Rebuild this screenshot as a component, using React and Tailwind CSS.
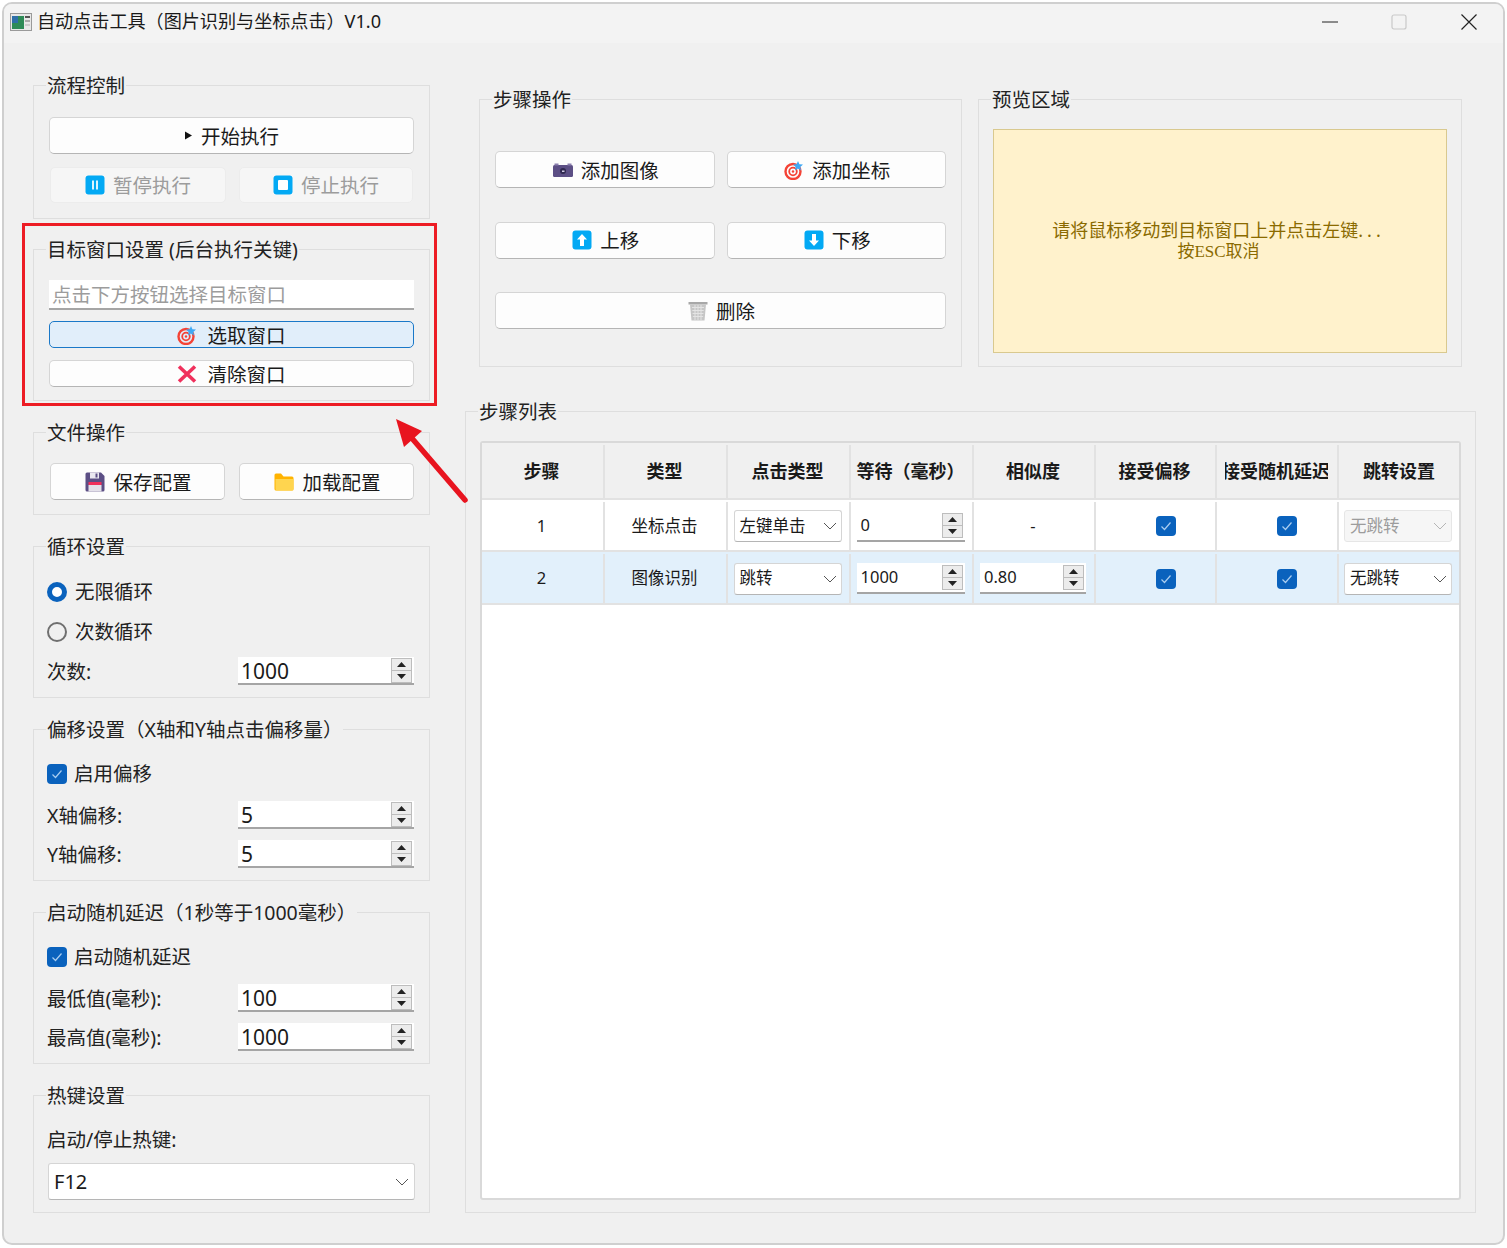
import React from 'react';

const FONT = 'font-["Noto_Sans","Noto_Sans_CJK_SC",sans-serif]';

function AppIcon() {
  return (
    <svg width="22" height="18" viewBox="0 0 22 18" className="shrink-0">
      <rect x="0.5" y="0.5" width="21" height="17" fill="#e8e8e8" stroke="#9a9a9a" />
      <rect x="2" y="3" width="12" height="13" fill="#2e8b57" />
      <rect x="2" y="3" width="6" height="7" fill="#2f6fa8" />
      <rect x="15" y="3" width="5" height="2" fill="#555" />
      <rect x="15" y="7" width="5" height="2" fill="#aaa" />
      <rect x="15" y="11" width="5" height="2" fill="#ccc" />
    </svg>
  );
}

function PlayIcon() {
  return (
    <svg width="9" height="9" viewBox="0 0 9 9" className="shrink-0">
      <path d="M1 0.5 L8 4.5 L1 8.5 Z" fill="#111" />
    </svg>
  );
}

function SquareIcon({ kind }) {
  return (
    <svg width="20" height="20" viewBox="0 0 20 20" className="shrink-0">
      <rect x="0.5" y="0.5" width="19" height="19" rx="3" fill="#03a9f4" />
      {kind === 'pause' && <path d="M7 5.5h2v9H7zM11 5.5h2v9h-2z" fill="#dff4fe" />}
      {kind === 'stop' && <rect x="5" y="5" width="10" height="10" rx="1" fill="#fff" />}
      {kind === 'up' && <path d="M10 4 L15 9.5 H12 V16 H8 V9.5 H5 Z" fill="#fff" />}
      {kind === 'down' && <path d="M10 16 L15 10.5 H12 V4 H8 V10.5 H5 Z" fill="#fff" />}
    </svg>
  );
}

function TargetIcon() {
  return (
    <svg width="20" height="20" viewBox="0 0 20 20" className="shrink-0">
      <circle cx="9" cy="11.5" r="7.5" fill="none" stroke="#f44336" strokeWidth="2.4" />
      <circle cx="9" cy="11.5" r="3.8" fill="none" stroke="#f44336" strokeWidth="1.8" />
      <circle cx="9" cy="11.5" r="1.2" fill="#f44336" />
      <path d="M14 1 L15.4 4.2 L19 4.6 L16.3 6.9 L17 10.4 L14 8.6 L11 10.4 L11.7 6.9 L9 4.6 L12.6 4.2 Z" fill="#3fa9f5" />
    </svg>
  );
}

function CrossIcon() {
  return (
    <svg width="20" height="18" viewBox="0 0 20 18" className="shrink-0">
      <path d="M2 1.5 L18 16.5 M18 1.5 L2 16.5" stroke="#f0305c" strokeWidth="3.6" />
    </svg>
  );
}

function SaveIcon() {
  return (
    <svg width="20" height="20" viewBox="0 0 20 20" className="shrink-0">
      <path d="M0.5 2 a1.5 1.5 0 0 1 1.5 -1.5 H16 L19.5 4 V18 a1.5 1.5 0 0 1 -1.5 1.5 H2 a1.5 1.5 0 0 1 -1.5 -1.5 Z" fill="#5c4f85" />
      <rect x="5" y="0.5" width="9" height="6" fill="#e9e7ef" />
      <rect x="10.5" y="1.5" width="2" height="4" fill="#5c4f85" />
      <rect x="3.5" y="10" width="13" height="3" fill="#f0305c" />
      <rect x="3.5" y="13" width="13" height="6.5" fill="#e4e1ea" />
    </svg>
  );
}

function FolderIcon() {
  return (
    <svg width="20" height="18" viewBox="0 0 20 18" className="shrink-0">
      <path d="M0.5 2 a1.5 1.5 0 0 1 1.5 -1.5 H7 L9.5 3.5 H18 a1.5 1.5 0 0 1 1.5 1.5 V16 a1.5 1.5 0 0 1 -1.5 1.5 H2 a1.5 1.5 0 0 1 -1.5 -1.5 Z" fill="#ffb300" />
      <path d="M1.5 6 H19.5 V16 a1.5 1.5 0 0 1 -1.5 1.5 H3 a1.5 1.5 0 0 1 -1.5 -1.5 Z" fill="#ffd54f" />
    </svg>
  );
}

function CameraIcon() {
  return (
    <svg width="20" height="14" viewBox="0 0 20 14" className="shrink-0">
      <rect x="0" y="2" width="20" height="12" rx="1.5" fill="#5c4f85" />
      <rect x="1.5" y="0.5" width="4" height="2" fill="#8a7fae" />
      <rect x="14.5" y="0.5" width="4" height="2" fill="#8a7fae" />
      <circle cx="10" cy="8" r="3" fill="#2f2850" />
      <path d="M9 7.5h2.5v1.5H9z" fill="#cfc9e2" />
    </svg>
  );
}

function TrashIcon() {
  return (
    <svg width="20" height="20" viewBox="0 0 20 20" className="shrink-0">
      <rect x="0.5" y="1" width="19" height="2.5" fill="#a8a8a8" />
      <path d="M2 3.5 H18 L16.5 19.5 H3.5 Z" fill="#c6c6c6" />
      <path d="M4 6.5h12M4.3 9.5h11.4M4.6 12.5h10.8M4.9 15.5h10.2M7 4v15M10 4v15M13 4v15" stroke="#e4e4e4" strokeWidth="1" />
    </svg>
  );
}

function Chevron({ color = '#555' }) {
  return (
    <svg width="14" height="8" viewBox="0 0 14 8" className="shrink-0">
      <path d="M1 1 L7 7 L13 1" fill="none" stroke={color} strokeWidth="1" />
    </svg>
  );
}

function CheckBox({ className = '' }) {
  return (
    <span className={`w-5 h-5 shrink-0 rounded-[4px] bg-[#0a62bd] flex items-center justify-center ${className}`}>
      <svg width="12" height="10" viewBox="0 0 12 10">
        <path d="M1.5 5.5 L4.5 8.5 L10.5 1.5" fill="none" stroke="#a9cdf0" strokeWidth="1.2" />
      </svg>
    </span>
  );
}

function Group({ title, className, children }) {
  return (
    <div className={`relative border border-[#dedede] ${className}`}>
      <span className="absolute left-[12px] top-[-13px] bg-[#f0f0f0] px-px text-[19.5px] leading-[26px] text-[#222] whitespace-nowrap">
        {title}
      </span>
      {children}
    </div>
  );
}

function Btn({ icon, children, className = '', variant = 'normal', gap = 'gap-2' }) {
  const look = {
    normal: 'bg-[#fdfdfd] border-[#d5d5d5] border-b-[#b5b5b5] text-[#1a1a1a]',
    disabled: 'bg-[#f6f6f6] border-[#ececec] text-[#9c9c9c]',
    active: 'bg-[#e1eefa] border-[#1a78c8] text-[#1a1a1a]',
  }[variant];
  return (
    <div className={`flex items-center justify-center ${gap} border rounded-[5px] text-[19.5px] ${look} ${className}`}>
      {icon}
      <span className="pt-[2px]">{children}</span>
    </div>
  );
}

function SpinButtons() {
  return (
    <div className="flex flex-col gap-px border border-[#bdbdbd] bg-[#bdbdbd] w-[21px] h-[25px] shrink-0">
      <span className="flex-1 bg-[#ececec] flex items-center justify-center">
        <svg width="9" height="5" viewBox="0 0 9 5"><path d="M4.5 0 L9 5 H0 Z" fill="#222" /></svg>
      </span>
      <span className="flex-1 bg-[#ececec] flex items-center justify-center">
        <svg width="9" height="5" viewBox="0 0 9 5"><path d="M4.5 5 L9 0 H0 Z" fill="#222" /></svg>
      </span>
    </div>
  );
}

function Spin({ value }) {
  return (
    <div className="w-[176px] h-[28px] flex items-center justify-between bg-white border-b-2 border-[#a5a5a5] pl-[3px] pr-[2px] text-[21px] leading-[26px] text-[#1a1a1a]">
      <span className="pt-[2px]">{value}</span>
      <SpinButtons />
    </div>
  );
}

function SpinRow({ label, value, className = '' }) {
  return (
    <div className={`flex items-center justify-between ${className}`}>
      <span className="pt-px text-[19.5px] leading-[26px] text-[#222]">{label}</span>
      <Spin value={value} />
    </div>
  );
}

function CellSpin({ value, width = 'w-[108px]' }) {
  return (
    <div className={`${width} h-[31px] flex items-center justify-between bg-white border-b-2 border-[#a5a5a5] pl-[4px] pr-[2px] text-[16.5px] text-[#1a1a1a]`}>
      <span>{value}</span>
      <SpinButtons />
    </div>
  );
}

function CellSelect({ value, disabled, width = 'w-[108px]' }) {
  return (
    <div className={`${width} h-[32px] flex items-center justify-between border rounded-[3px] pl-[5px] pr-[4px] text-[16.5px] ${disabled ? 'bg-[#f6f6f6] border-[#e6e6e6] text-[#9c9c9c]' : 'bg-white border-[#d5d5d5] border-b-[#b5b5b5] text-[#1a1a1a]'}`}>
      <span>{value}</span>
      <Chevron color={disabled ? '#b5b5b5' : '#555'} />
    </div>
  );
}

const columns = ['步骤', '类型', '点击类型', '等待（毫秒）', '相似度', '接受偏移', '接受随机延迟', '跳转设置'];
const gridCols = 'grid grid-cols-[123px_123px_123px_123px_122px_121px_122px_122px]';

function Cell({ children, last, className = '' }) {
  return (
    <div className={`flex items-center justify-center overflow-hidden ${last ? '' : 'border-r-2 border-[#e2e2e2]'} ${className}`}>
      {children}
    </div>
  );
}

function StepRow({ num, type, click, wait, similar, jumpDisabled, className }) {
  return (
    <div className={`${gridCols} pt-[2px] border-b-2 border-[#e2e2e2] text-[16.5px] text-[#1a1a1a] ${className}`}>
      <Cell className="pr-[2px]">{num}</Cell>
      <Cell className="pr-[2px]">{type}</Cell>
      <Cell className="pr-[2px]"><CellSelect value={click} /></Cell>
      <Cell className="pr-[2px]"><CellSpin value={wait} /></Cell>
      <Cell className="pr-[2px]">{similar === '-' ? '-' : <CellSpin value={similar} width="w-[106px]" />}</Cell>
      <Cell><CheckBox className="ml-5" /></Cell>
      <Cell><CheckBox className="ml-5" /></Cell>
      <Cell last className="pr-[4px]"><CellSelect value="无跳转" disabled={jumpDisabled} /></Cell>
    </div>
  );
}

function App() {
  return (
    <div className={`relative w-[1507px] h-[1248px] bg-white pt-[2px] pl-[2px] ${FONT}`}>
      <div className="w-[1503px] h-[1243px] flex flex-col overflow-hidden border-2 border-[#cfcfcf] rounded-[10px] bg-[#f0f0f0]">
        {/* title bar */}
        <div className="h-[39px] shrink-0 flex items-center bg-[#f3f3f3] pl-[6px] pb-[3px] text-[18.1px] text-[#1a1a1a]">
          <AppIcon />
          <span className="ml-[5px] whitespace-nowrap">自动点击工具（图片识别与坐标点击）V1.0</span>
          <div className="ml-auto flex items-center pr-[26px]">
            <svg width="16" height="2" viewBox="0 0 16 2"><path d="M0 1h16" stroke="#222" strokeWidth="1" /></svg>
            <svg width="16" height="16" viewBox="0 0 16 16" className="ml-[53px]">
              <rect x="1" y="1" width="14" height="14" rx="2" fill="none" stroke="#c9c9c9" strokeWidth="1.2" />
            </svg>
            <svg width="16" height="16" viewBox="0 0 16 16" className="ml-[54px]">
              <path d="M0.5 0.5 L15.5 15.5 M15.5 0.5 L0.5 15.5" stroke="#222" strokeWidth="1.2" />
            </svg>
          </div>
        </div>

        <div className="flex-1 flex items-start pl-[29px] pt-[42px] gap-[35px]">
          {/* left column */}
          <div className="w-[397px] shrink-0 flex flex-col">
            <Group title="流程控制" className="h-[134px] px-[15px] pt-[31px]">
              <Btn icon={<PlayIcon />} className="h-[37px]">开始执行</Btn>
              <div className="mt-[13px] flex pl-px">
                <Btn variant="disabled" icon={<SquareIcon kind="pause" />} className="w-[176px] h-[36px]">暂停执行</Btn>
                <Btn variant="disabled" icon={<SquareIcon kind="stop" />} className="ml-[13px] w-[174px] h-[36px]">停止执行</Btn>
              </div>
            </Group>

            <Group title="目标窗口设置 (后台执行关键)" className="mt-[30px] h-[152px] px-[15px] pt-[30px]">
              <div className="h-[30px] flex items-center bg-white border-b-2 border-[#a5a5a5] pl-[3px] pt-[2px] text-[19.5px] text-[#9c9c9c]">
                点击下方按钮选择目标窗口
              </div>
              <Btn variant="active" gap="gap-[10px]" icon={<TargetIcon />} className="mt-[11px] h-[27px]">选取窗口</Btn>
              <Btn gap="gap-[10px]" icon={<CrossIcon />} className="mt-[12px] h-[27px]">清除窗口</Btn>
            </Group>

            <Group title="文件操作" className="mt-[31px] h-[83px] px-[15px] pt-[30px]">
              <div className="flex gap-[14px] pl-px">
                <Btn icon={<SaveIcon />} className="flex-1 h-[37px] pl-[2px]">保存配置</Btn>
                <Btn icon={<FolderIcon />} className="flex-1 h-[37px] pl-[2px]">加载配置</Btn>
              </div>
            </Group>

            <Group title="循环设置" className="mt-[31px] h-[152px] pl-[13px] pr-[14px] pt-[34px]">
              <div className="flex items-center gap-2 h-[22px] text-[19.5px] text-[#222]">
                <span className="w-5 h-5 rounded-full border-[5px] border-[#0a62bd] bg-white shrink-0" />
                无限循环
              </div>
              <div className="mt-[18px] flex items-center gap-2 h-[22px] text-[19.5px] text-[#222]">
                <span className="w-5 h-5 rounded-full border-2 border-[#6f6f6f] shrink-0" />
                次数循环
              </div>
              <SpinRow label="次数:" value="1000" className="mt-[14px] mr-px" />
            </Group>

            <Group title="偏移设置（X轴和Y轴点击偏移量）" className="mt-[31px] h-[152px] pl-[13px] pr-[14px] pt-[33px]">
              <div className="flex items-center gap-[7px] h-[22px] text-[19.5px] text-[#222]">
                <CheckBox />
                启用偏移
              </div>
              <SpinRow label="X轴偏移:" value="5" className="mt-[16px] mr-px" />
              <SpinRow label="Y轴偏移:" value="5" className="mt-[11px] mr-px" />
            </Group>

            <Group title="启动随机延迟（1秒等于1000毫秒）" className="mt-[31px] h-[152px] pl-[13px] pr-[14px] pt-[33px]">
              <div className="flex items-center gap-[7px] h-[22px] text-[19.5px] text-[#222]">
                <CheckBox />
                启动随机延迟
              </div>
              <SpinRow label="最低值(毫秒):" value="100" className="mt-[16px] mr-px" />
              <SpinRow label="最高值(毫秒):" value="1000" className="mt-[11px] mr-px" />
            </Group>

            <Group title="热键设置" className="mt-[31px] h-[118px] pl-[13px] pr-[14px] pt-[31px]">
              <div className="text-[19.5px] leading-[26px] text-[#222]">启动/停止热键:</div>
              <div className="mt-[10px] ml-px h-[37px] flex items-center justify-between bg-white border border-[#d5d5d5] border-b-[#b5b5b5] rounded-[3px] pl-[5px] pr-[5px] text-[20px] text-[#1a1a1a]">
                <span>F12</span>
                <Chevron />
              </div>
            </Group>
          </div>

          {/* right column */}
          <div className="w-[1011px] shrink-0 flex flex-col">
            <div className="flex gap-4 px-[14px] pt-[14px]">
              <Group title="步骤操作" className="w-[483px] h-[268px] px-[15px] pt-[51px]">
                <div className="grid grid-cols-2 gap-x-[12px] gap-y-[33.5px]">
                  <Btn icon={<CameraIcon />} className="h-[37px] pl-[2px]">添加图像</Btn>
                  <Btn icon={<TargetIcon />} className="h-[37px] pl-[2px]">添加坐标</Btn>
                  <Btn icon={<SquareIcon kind="up" />} className="h-[37px] pl-[2px]">上移</Btn>
                  <Btn icon={<SquareIcon kind="down" />} className="h-[37px] pl-[2px]">下移</Btn>
                  <Btn icon={<TrashIcon />} className="h-[37px] pl-[2px] col-span-2">删除</Btn>
                </div>
              </Group>
              <Group title="预览区域" className="w-[484px] h-[268px] px-[14px] pt-[29px]">
                <div className="h-[224px] flex flex-col items-center justify-center border border-[#d9c98f] bg-[#fff2cc] pr-[3px] text-[18px] leading-[22px] text-[#8a6a00]">
                  <span>请将鼠标移动到目标窗口上并点击左键<span className="tracking-[4px]">...</span></span>
                  <span className="text-[17px] font-['Liberation_Serif','Noto_Sans_CJK_SC',serif]">按ESC取消</span>
                </div>
              </Group>
            </div>

            <Group title="步骤列表" className="mt-[44px] h-[802px] pl-[14px] pr-[14px] pt-[29px]">
              <div className="h-[759px] bg-white border-2 border-[#d9d9d9] rounded-[3px] overflow-hidden">
                <div className={`${gridCols} h-[57px] pt-[2px] bg-[#f0f0f0] border-b-2 border-[#e2e2e2] text-[18px] font-bold text-[#1a1a1a]`}>
                  {columns.map((col, i) => (
                    <Cell key={col} last={i === columns.length - 1} className="pr-[2px]">
                      {col === '接受随机延迟' ? (
                        <div className="w-[103px] flex justify-center overflow-hidden">
                          <span className="shrink-0 whitespace-nowrap">{col}</span>
                        </div>
                      ) : (
                        <span className="whitespace-nowrap">{col}</span>
                      )}
                    </Cell>
                  ))}
                </div>
                <StepRow num="1" type="坐标点击" click="左键单击" wait="0" similar="-" jumpDisabled className="h-[52px] bg-white" />
                <StepRow num="2" type="图像识别" click="跳转" wait="1000" similar="0.80" className="h-[53px] bg-[#e2f0fb]" />
              </div>
            </Group>
          </div>
        </div>
      </div>

      {/* red annotation on top of the screenshot */}
      <div className="absolute left-[22px] top-[223px] w-[415px] h-[183px] border-[3px] border-[#ed1c24] pointer-events-none" />
      <svg width="90" height="100" viewBox="0 0 90 100" className="absolute left-[390px] top-[412px] pointer-events-none">
        <path d="M75 88 L20 24" stroke="#e8141f" strokeWidth="5.5" strokeLinecap="round" />
        <path d="M6 7 L32 19 L14 35 Z" fill="#e8141f" />
      </svg>
    </div>
  );
}

export default App;
